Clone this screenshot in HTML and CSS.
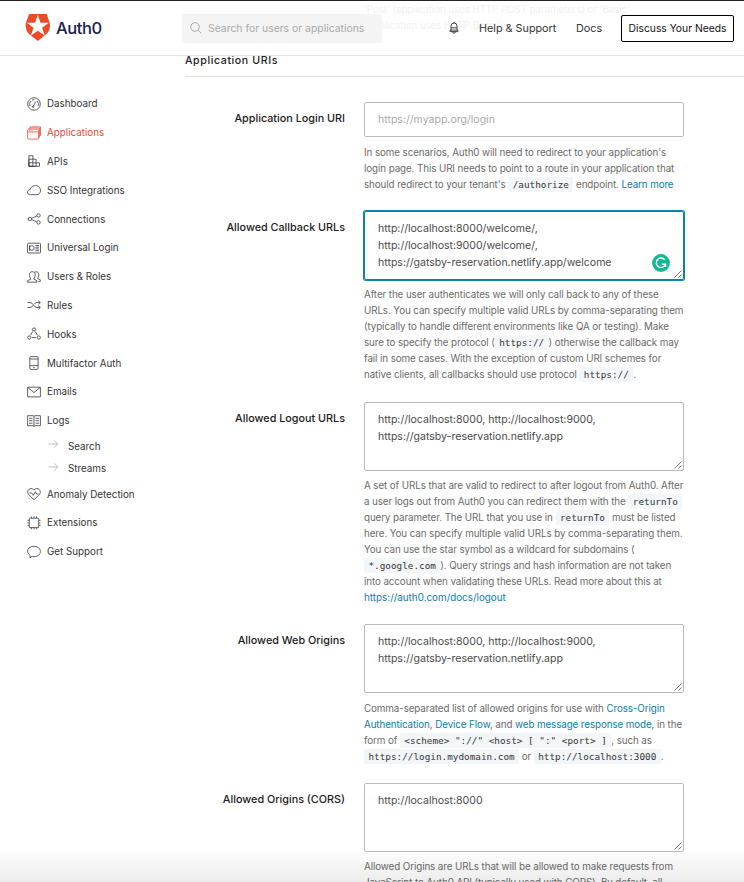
FILE: index.html
```html
<!DOCTYPE html>
<html lang="en">
<head>
<meta charset="utf-8">
<title>Auth0</title>
<link rel="stylesheet" href="styles.css">
</head>
<body>
<header class="topbar">
  <p class="ghost">'Post' (application uses HTTP POST parameters) or 'Basic'<br>(application uses HTTP Basic).</p>
  <div class="brand">
    <svg class="shield" width="26" height="28" viewBox="0 0 26 28"><path fill="#eb4b27" d="M4 0h17.600l3.100 9c1 4.500-.6 9-4.100 11.800L12.800 27l-7.800-6.200C1.500 18-.1 13.500.9 9z"/><path fill="#fff" d="M12.800.8l2.700 8h8.300l-6.700 4.900 2.600 7.900-6.900-4.800-6.900 4.800 2.600-7.900-6.700-4.900h8.300z"/></svg>
    <span class="wordmark">Auth0</span>
  </div>
  <div class="search">
    <svg width="12" height="12" viewBox="0 0 12 12" fill="none" stroke="#aaa"><circle cx="5" cy="5" r="4.300"/><path d="M8.200 8.200l3.200 3.200"/></svg>
    <span>Search for users or applications</span>
  </div>
  <svg class="bell" width="10" height="12" viewBox="0 0 10 12" fill="none" stroke="#333" stroke-width=".9"><path d="M2 8V4a3 3 0 0 1 6 0v4M5 1V0M2 5.800h6M1 8.100h8v1.500H1zM3.500 9.700a1.500 1.500 0 0 0 3 0"/></svg>
  <span class="help">Help &amp; Support</span>
  <span class="docs">Docs</span>
  <span class="discuss">Discuss Your Needs</span>
</header>
<div class="body">
  <nav class="nav">
    <div class="item"><svg viewBox="0 0 14 14"><circle cx="7" cy="7" r="6.300"/><path d="M6.300 9.300L8.800 4.500M3 9a4.300 4.300 0 0 1 1-5M5 3.200a4.300 4.300 0 0 1 2.500-.5M10.400 4.300A4.300 4.300 0 0 1 11 9"/><circle cx="6.200" cy="9.600" r=".8"/></svg><span>Dashboard</span></div>
    <div class="item active"><svg viewBox="0 0 14 14"><rect x=".6" y="3.200" width="11" height="9.900" rx="1"/><path d="M.6 5.900h11M2.300 3V2h10.200v9.300M3.500 1.900v-1h10v9M2.200 4.500h1M4.500 4.500h1"/></svg><span>Applications</span></div>
    <div class="item"><svg viewBox="0 0 14 14"><path d="M1.900 1.700h4v10.600h-4zM1.900 5.200h7.200v7.100H1.900zM1.900 8.800h10.600v3.500H1.900z"/></svg><span>APIs</span></div>
    <div class="item"><svg viewBox="0 0 14 14"><path d="M3.300 11.700C-.4 11.600-.3 6.800 3.200 6.600 3.700 3.800 7.600 1.200 11.200 3.200c3.600 2.300 2.700 8.300-1.200 8.500z"/></svg><span>SSO Integrations</span></div>
    <div class="item"><svg viewBox="0 0 14 14"><circle cx="3" cy="7" r="1.700"/><circle cx="11.500" cy="3.500" r="1.700"/><circle cx="11.500" cy="10.400" r="1.700"/><path d="M.4 7h1M4.700 6.300L9.800 4M4.700 7.600l5 2.300"/></svg><span>Connections</span></div>
    <div class="item"><svg viewBox="0 0 14 14"><rect x=".5" y="2.200" width="13" height="9.800" rx="1"/><circle cx="4.900" cy="7" r="2.300"/><path d="M2.500 4.300v5.500M8.500 4.500H12M8.500 6.200H12M8.500 8H12M8.500 9.700H12"/></svg><span>Universal Login</span></div>
    <div class="item"><svg viewBox="0 0 14 14"><path d="M.7 12.200v-1.600l3.200-1.400c-2.200-3-2.200-7.500 1.400-7.500s3.600 4.500 1.400 7.500l3.200 1.400v1.600zM7.600 2.200c4-1.800 5.200 2.500 3 6.300l2.700 1.300v1.600h-2"/></svg><span>Users &amp; Roles</span></div>
    <div class="item"><svg viewBox="0 0 14 14"><path d="M.5 4.500h2.600c3 0 3.800 5 6.800 5h3.300M.5 9.500h2.600c1.400 0 2.200-1 3-2.300M7.400 6c.7-.9 1.400-1.500 2.500-1.500h3.300M11.300 2.600l2 1.900-2 1.900M11.300 7.600l2 1.900-2 1.900"/></svg><span>Rules</span></div>
    <div class="item"><svg viewBox="0 0 14 14"><circle cx="7" cy="2.500" r="1.600"/><circle cx="2.200" cy="10.500" r="1.600"/><circle cx="11.800" cy="10.500" r="1.600"/><path d="M5.700 4.500L3.500 8.300M8.300 4.500l2.300 3.800M4.700 10.600h4.500"/></svg><span>Hooks</span></div>
    <div class="item"><svg viewBox="0 0 14 14"><rect x="2.800" y=".6" width="8.300" height="12.800" rx="1.200"/><path d="M2.800 3h8.300M2.800 9.600h8.300M6.300 11.500h1.400"/></svg><span>Multifactor Auth</span></div>
    <div class="item"><svg viewBox="0 0 14 14"><path d="M.6 2.200h12.800v9.700H.6zM1 2.600l6 5 6-5"/></svg><span>Emails</span></div>
    <div class="item"><svg viewBox="0 0 14 14"><path d="M.6 1.700H6l1 .6 1-.6h5.400v10H8l-1 .7-1-.7H.6zM7 2.300v10M2 4.300h3.500M2 6.700h3.500M2 9.200h3.500M8.600 4.300h3.500M8.600 6.700h3.500M8.600 9.200h3.500"/></svg><span>Logs</span></div>
    <div class="sub"><svg viewBox="0 0 12 10"><path d="M.5 5h10M6.800 1.200L10.700 5 6.800 8.800"/></svg><span>Search</span></div>
    <div class="sub"><svg viewBox="0 0 12 10"><path d="M.5 5h10M6.800 1.200L10.700 5 6.800 8.800"/></svg><span>Streams</span></div>
    <div class="item"><svg viewBox="0 0 14 14"><path d="M7 12.700L1.500 7.400C-1 4 3 -1 7 3c4-4 8 1 5.500 4.400zM2.500 6h2.300l1.500 2.300 2-3.600L9.500 7h2"/></svg><span>Anomaly Detection</span></div>
    <div class="item"><svg viewBox="0 0 14 14"><rect x="2.300" y="2.200" width="9.400" height="9.400" rx=".6"/><path d="M4.400 2V.5M7 2V.5M9.600 2V.5M4.400 13.300v-1.500M7 13.300v-1.500M9.600 13.300v-1.500M2 4.300H.5M2 7H.5M2 9.600H.5M13.500 4.300H12M13.500 7H12M13.500 9.600H12"/></svg><span>Extensions</span></div>
    <div class="item"><svg viewBox="0 0 14 14"><path d="M2.900 12.900l.3-2.300C-1.700 7.100.8 1.300 7 1.300c8.500 0 8.500 10.400 0 10.400-.7 0-1.300-.1-1.900-.3z"/></svg><span>Get Support</span></div>
  </nav>
  <main class="main">
    <h2 class="title">Application URIs</h2>
    <section class="field f-login">
      <label>Application Login URI</label>
      <div class="control">
        <div class="box single">https://myapp.org/login</div>
        <p>In some scenarios, Auth0 will need to redirect to your application's<br>login page. This URI needs to point to a route in your application that<br>should redirect to your tenant's <code>/authorize</code> endpoint. <a>Learn more</a></p>
      </div>
    </section>
    <section class="field f-callback">
      <label>Allowed Callback URLs</label>
      <div class="control">
        <div class="box focus">http://localhost:8000/welcome/,<br>http://localhost:9000/welcome/,<br>https://gatsby-reservation.netlify.app/welcome<svg class="badge" width="18" height="18" viewBox="0 0 18 18"><circle cx="9" cy="9" r="8.900" fill="#11b992"/><path d="M12.700 5.800a4.700 4.700 0 1 0 .8 4.400H9.800M13.500 10v3" fill="none" stroke="#fff" stroke-width="1.500"/></svg><svg class="grip" viewBox="0 0 8 8"><path d="M.5 7.500l7-7M4.500 7.500l3-3"/></svg></div>
        <p>After the user authenticates we will only call back to any of these<br>URLs. You can specify multiple valid URLs by comma-separating them<br>(typically to handle different environments like QA or testing). Make<br>sure to specify the protocol (<code>https://</code>) otherwise the callback may<br>fail in some cases. With the exception of custom URI schemes for<br>native clients, all callbacks should use protocol <code>https://</code>.</p>
      </div>
    </section>
    <section class="field f-logout">
      <label>Allowed Logout URLs</label>
      <div class="control">
        <div class="box">http://localhost:8000, http://localhost:9000,<br>https://gatsby-reservation.netlify.app<svg class="grip" viewBox="0 0 8 8"><path d="M.5 7.500l7-7M4.500 7.500l3-3"/></svg></div>
        <p>A set of URLs that are valid to redirect to after logout from Auth0. After<br>a user logs out from Auth0 you can redirect them with the <code>returnTo</code><br>query parameter. The URL that you use in <code>returnTo</code> must be listed<br>here. You can specify multiple valid URLs by comma-separating them.<br>You can use the star symbol as a wildcard for subdomains (<br><code>*.google.com</code>). Query strings and hash information are not taken<br>into account when validating these URLs. Read more about this at<br><a class="url">https://auth0.com/docs/logout</a></p>
      </div>
    </section>
    <section class="field f-origins">
      <label>Allowed Web Origins</label>
      <div class="control">
        <div class="box">http://localhost:8000, http://localhost:9000,<br>https://gatsby-reservation.netlify.app<svg class="grip" viewBox="0 0 8 8"><path d="M.5 7.500l7-7M4.500 7.500l3-3"/></svg></div>
        <p>Comma-separated list of allowed origins for use with <a>Cross-Origin</a><br><a>Authentication</a>, <a>Device Flow</a>, and <a>web message response mode</a>, in the<br>form of <code>&lt;scheme&gt; "://" &lt;host&gt; [ ":" &lt;port&gt; ]</code>, such as<br><code>https://login.mydomain.com</code> or <code>http://localhost:3000</code>.</p>
      </div>
    </section>
    <section class="field f-cors">
      <label>Allowed Origins (CORS)</label>
      <div class="control">
        <div class="box">http://localhost:8000<svg class="grip" viewBox="0 0 8 8"><path d="M.5 7.500l7-7M4.500 7.500l3-3"/></svg></div>
        <p>Allowed Origins are URLs that will be allowed to make requests from<br>JavaScript to Auth0 API (typically used with CORS). By default, all</p>
      </div>
    </section>
  </main>
</div>
<div class="fade"></div>
</body>
</html>
```
FILE: styles.css
```css
* { box-sizing: border-box; }
body { margin: 0; width: 744px; height: 882px; overflow: hidden; position: relative; background: #fff; color: #333; font-family: Inter, "Liberation Sans", sans-serif; }
svg { display: block; flex: none; }

.topbar { position: relative; height: 56px; border-top: 1px solid #222; border-bottom: 1px solid #e3e3e3; display: flex; align-items: center; padding: 0 10px 0 25px; white-space: nowrap; font-size: 10.8px; }
.ghost { position: absolute; left: 364px; top: 1px; margin: 0; font-size: 9.8px; letter-spacing: -.09px; line-height: 16px; color: #f1f1f1; }
.brand { display: flex; align-items: center; width: 157px; }
.shield { margin-right: 5px; }
.wordmark { font-size: 16.500px; font-weight: 500; letter-spacing: -.45px; color: #16214d; }
.search { position: relative; width: 200px; height: 29px; background: #f4f4f4; border-radius: 2px; color: #aaa; display: flex; align-items: center; gap: 6px; padding-left: 8px; margin-right: 67px; font-size: 10.400px; }
.bell { position: relative; margin-right: 20px; }
.help { position: relative; width: 97px; }
.docs { position: relative; width: 45px; }
.discuss { width: 113px; height: 27px; border: 1px solid #000; border-radius: 2px; color: #111; display: flex; align-items: center; justify-content: center; font-size: 10.3px; }

.body { display: flex; }
.nav { width: 185px; padding: 33.500px 0 0 26.500px; font-size: 9.8px; white-space: nowrap; }
.nav svg { fill: none; stroke: #444; stroke-width: .85; }
.item { height: 28.8px; display: flex; align-items: center; gap: 6.500px; }
.item svg { width: 14px; height: 14px; }
.active { color: #eb4a32; }
.active svg { stroke: #f0553e; }
.sub { height: 22.3px; display: flex; align-items: center; gap: 9px; padding-left: 21.500px; }
.sub svg { width: 11px; height: 10px; stroke: #aaa; position: relative; top: -2px; }

.main { width: 559px; }
.title { margin: 0 0 25px; height: 21px; border-bottom: 1px solid #dcdcdc; font-size: 10.600px; font-weight: 500; letter-spacing: .6px; line-height: 9px; color: #222; }
.field { display: flex; gap: 19px; }
.f-login { height: 109px; }
.f-callback { height: 191px; }
.f-logout { height: 222px; }
.f-origins { height: 159px; }
.field label { width: 160px; padding-top: 9px; text-align: right; font-size: 10.800px; line-height: 16px; font-weight: 500; color: #1a1a1a; white-space: nowrap; }
.control { width: 320px; }
.box { position: relative; height: 69px; border: 1px solid #bbb; border-radius: 2px; padding: 8px 13px; font-size: 10.550px; line-height: 17.200px; color: #4a4a4a; white-space: nowrap; }
.single { height: 35px; color: #aaa; font-size: 10.550px; }
.focus { border-color: #0a84ae; box-shadow: 0 0 0 1px #0a84ae; }
.grip { position: absolute; right: 1px; bottom: 1px; width: 8px; height: 8px; fill: none; stroke: #555; stroke-width: .8; }
.badge { position: absolute; left: 287px; top: 42px; }
.control p { margin: 8px 0 0; font-size: 9.800px; letter-spacing: -.09px; line-height: 16px; color: #6a6a6a; white-space: nowrap; }
.f-callback p, .f-logout p, .f-cors p { margin-top: 7px; }
code { font-family: "DejaVu Sans Mono", monospace; font-size: 9.350px; letter-spacing: 0; line-height: 1; color: #333; background: #f3f6f9; border-radius: 2px; padding: 2px 4.400px; }
a { color: #0a7ea5; }
.url { letter-spacing: .03px; }
.fade { position: absolute; left: 0; right: 0; bottom: 0; height: 34px; background: linear-gradient(rgba(0,0,0,0), rgba(0,0,0,.075)); }
```
